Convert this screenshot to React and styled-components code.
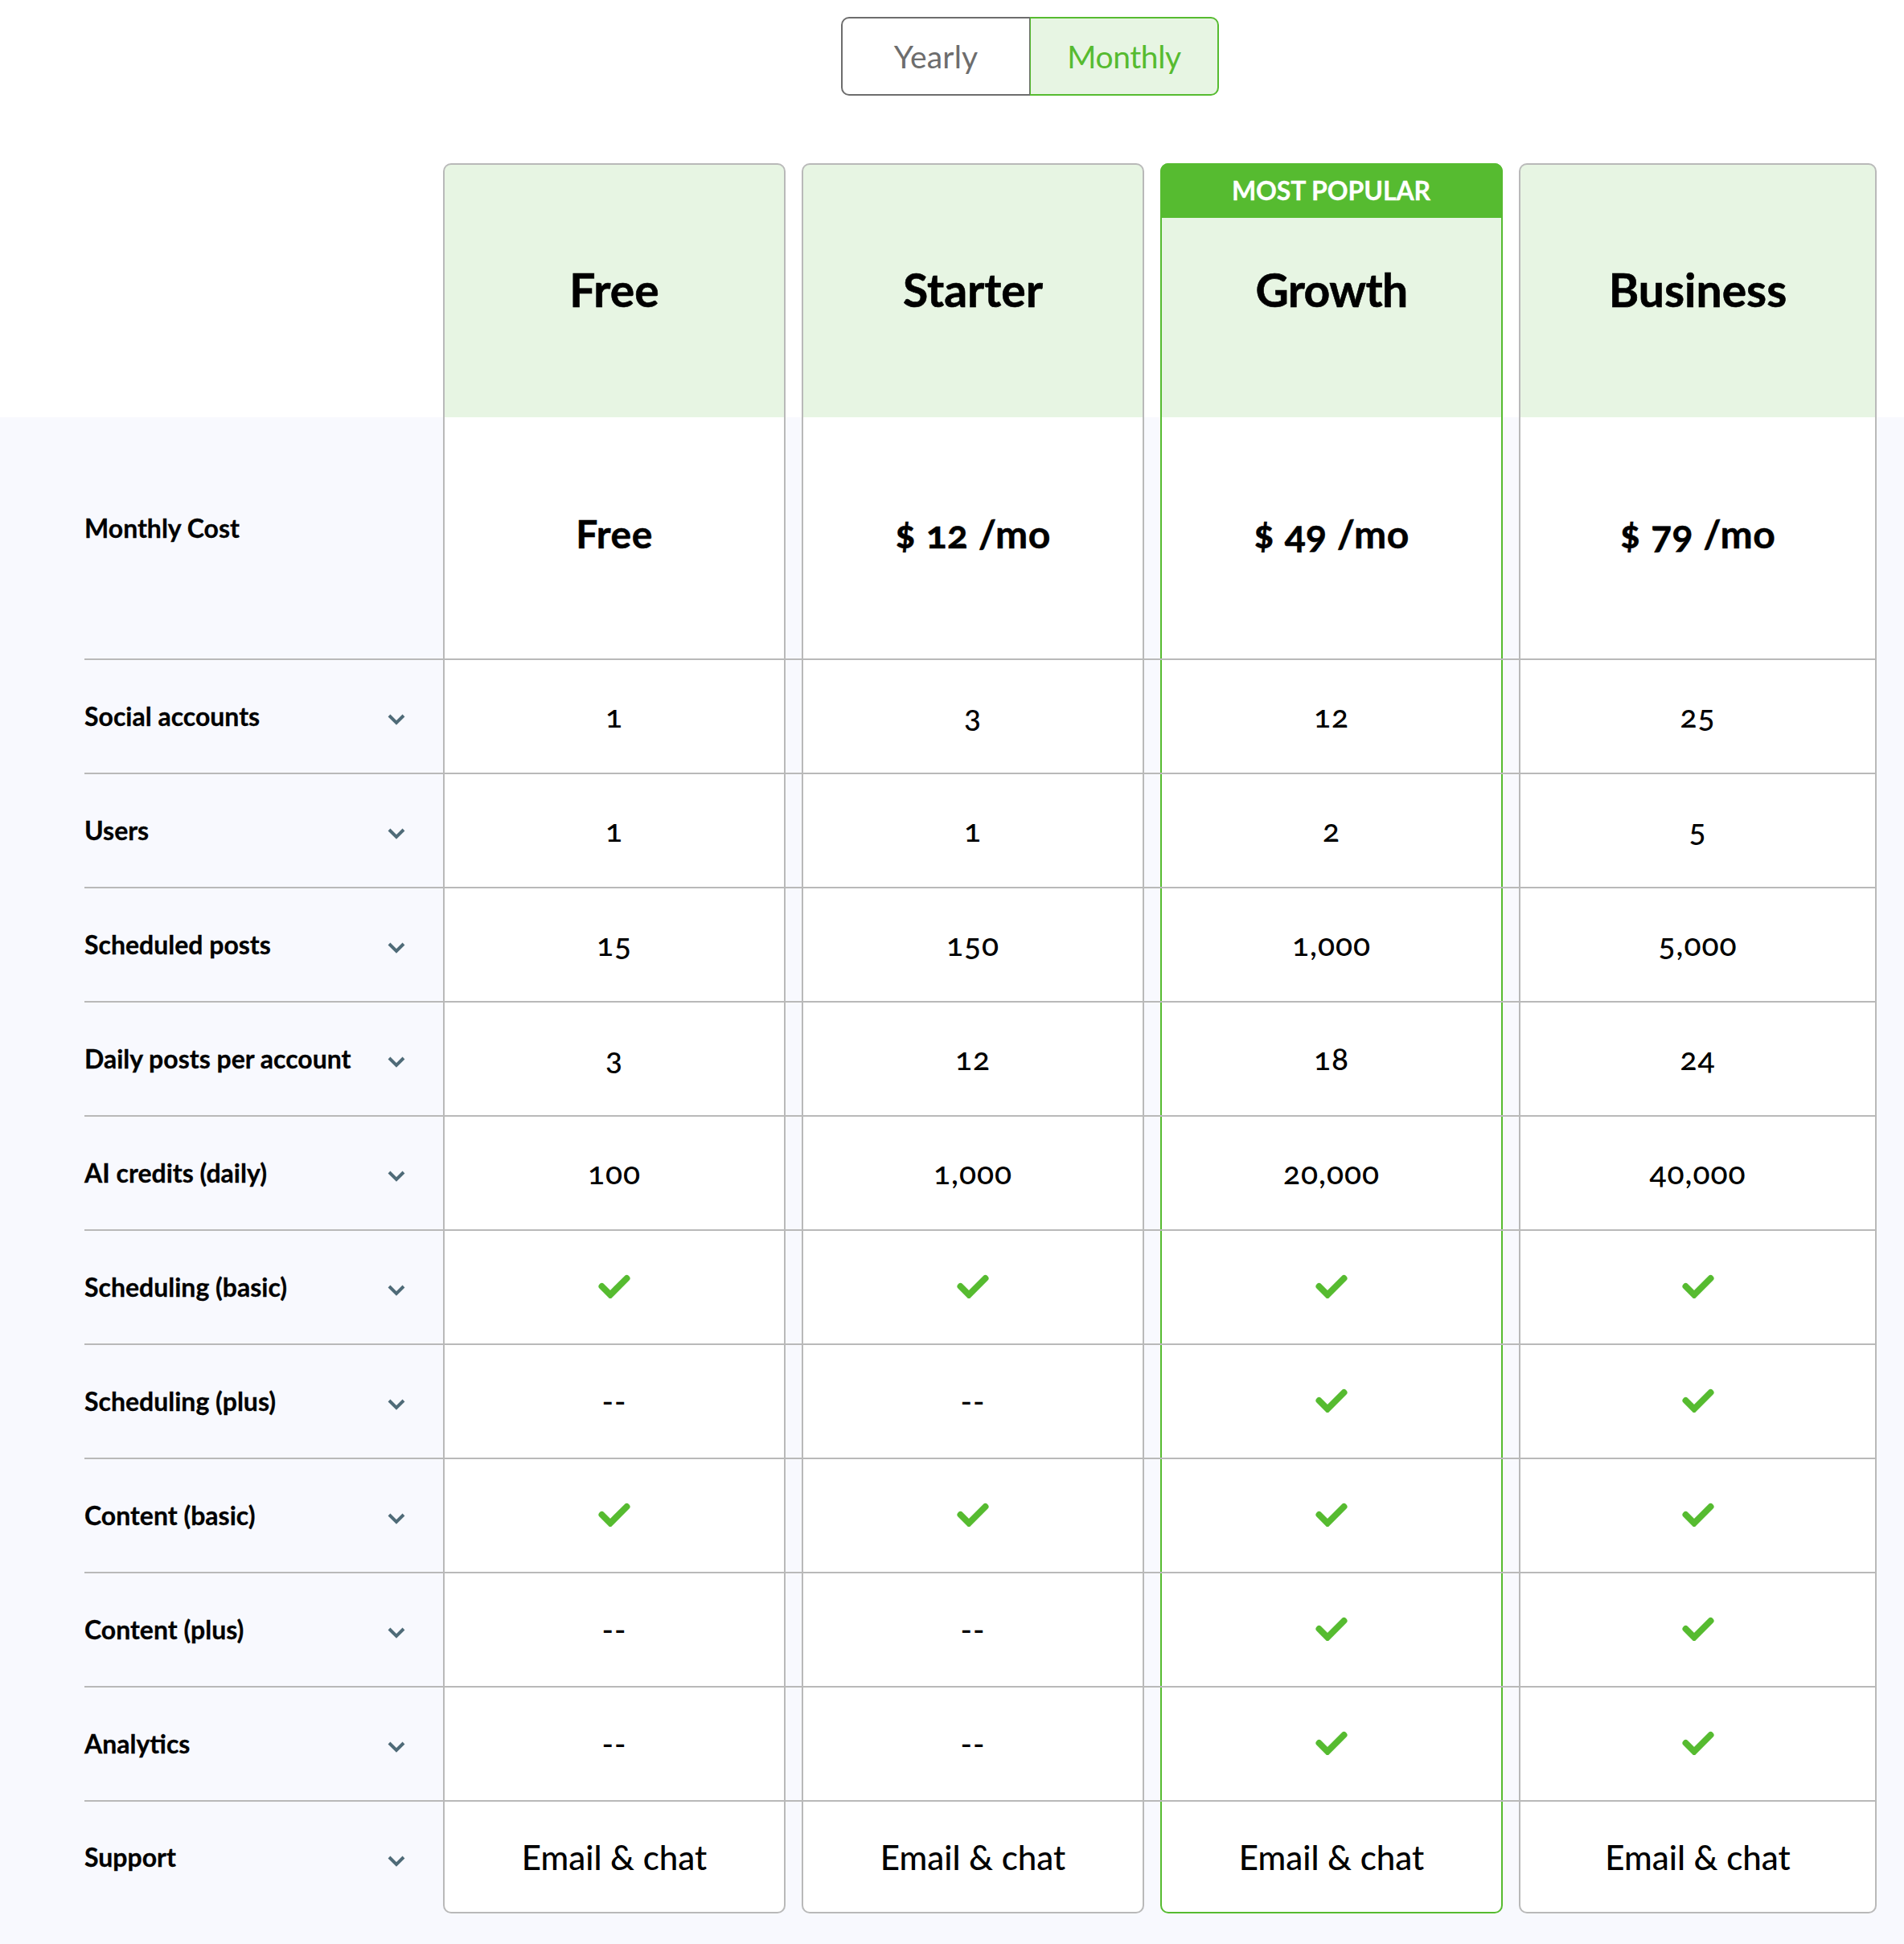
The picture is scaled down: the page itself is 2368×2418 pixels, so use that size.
import React from 'react'
import styled, { createGlobalStyle } from 'styled-components'

const GlobalStyle = createGlobalStyle`
  body {
    margin: 0;
    background: #fff;
    font-family: "Lato", "Liberation Sans", sans-serif;
    color: #000;
    font-feature-settings: "onum" 1;
  }
`

const COLUMNS = '426px 426px 426px 426px 445px'
const GREEN = '#56bb30'
const LINE = '#b9b9b9'

const Page = styled.div`
  width: 2368px;
  height: 2418px;
  display: flex;
  flex-direction: column;
  overflow: hidden;
`
const ToggleBar = styled.div`
  display: flex;
  padding: 21px 0 0 1046px;
`
const ToggleButton = styled.button`
  width: 235px;
  height: 98px;
  padding: 0;
  font: 400 39px "Lato", sans-serif;
  letter-spacing: ${p => p.$active ? -0.4 : 0.2}px;
  color: ${p => p.$active ? GREEN : '#6d6d6d'};
  background: ${p => p.$active ? '#e7f5e3' : '#fff'};
  border: 2px solid ${p => p.$active ? GREEN : '#6d6d6d'};
  border-right-width: ${p => p.$active ? 2 : 1}px;
  border-left-width: ${p => p.$active ? 1 : 2}px;
  border-radius: ${p => p.$active ? '0 10px 10px 0' : '10px 0 0 10px'};
`
const HeaderRow = styled.div`
  display: grid;
  grid-template-columns: ${COLUMNS};
  column-gap: 20px;
  margin: 84px 0 0 105px;
  width: 2229px;
  height: 316px;
`
const PlanHead = styled.div`
  position: relative;
  display: flex;
  align-items: center;
  justify-content: center;
  padding-bottom: 4px;
  background: #e7f5e3;
  border: 2px solid ${p => p.$popular ? GREEN : LINE};
  border-bottom: 0;
  border-radius: 10px 10px 0 0;
  font-size: 57px;
  font-weight: 700;
  letter-spacing: ${p => p.$popular ? -0.6 : 0}px;
  -webkit-text-stroke: 0.6px #000;
`
const PopularBand = styled.div`
  position: absolute;
  top: -2px;
  left: -2px;
  right: -2px;
  height: 68px;
  padding: 0 1px 2px 0;
  box-sizing: border-box;
  display: flex;
  align-items: center;
  justify-content: center;
  background: ${GREEN};
  border-radius: 10px 10px 0 0;
  color: #fff;
  font-size: 32px;
  font-weight: 700;
  letter-spacing: -0.1px;
  -webkit-text-stroke: 0.3px #fff;
`
const Body = styled.div`
  flex: 1;
  background: #f8f9fe;
  padding-left: 105px;
`
const Row = styled.div`
  display: grid;
  grid-template-columns: ${COLUMNS};
  column-gap: 20px;
  width: 2229px;
  height: ${p => p.$first ? 300 : p.$last ? 141 : 142}px;
  border-top: ${p => p.$first ? 0 : 2}px solid ${LINE};
  box-sizing: border-box;
`
const Label = styled.div`
  display: flex;
  align-items: center;
  justify-content: space-between;
  padding: 0 ${p => p.$first ? 0 : 27}px ${p => p.$first ? 26 : 2}px 0;
  font-size: 32px;
  font-weight: 700;
  -webkit-text-stroke: 0.3px #000;
`
const Chevron = styled.svg`
  width: 22px;
  height: 14px;
  margin-top: 10px;
  fill: none;
  stroke: #4f6b78;
  stroke-width: 4;
`
const Cell = styled.div`
  display: flex;
  align-items: center;
  justify-content: center;
  background: #fff;
  border-left: 2px solid ${p => p.$popular ? GREEN : LINE};
  border-right: 2px solid ${p => p.$popular ? GREEN : LINE};
  border-bottom: ${p => p.$last ? `2px solid ${p.$popular ? GREEN : LINE}` : 0};
  border-radius: ${p => p.$last ? '0 0 10px 10px' : 0};
  box-sizing: border-box;
  padding-bottom: ${p => p.$price ? 12 : p.$text ? 0 : 3}px;
  font-size: ${p => p.$price ? 48 : p.$text ? 42 : 39}px;
  font-weight: ${p => p.$price ? 700 : 500};
  letter-spacing: ${p => p.$price ? 0.5 : p.$text ? 0 : 1}px;
  -webkit-text-stroke: ${p => p.$price ? 0.5 : 0}px #000;
`
const CheckIcon = styled.svg`
  width: 40px;
  height: 30px;
  fill: none;
  stroke: ${GREEN};
  stroke-width: 8;
  stroke-linecap: round;
`

const plans = ['Free', 'Starter', 'Growth', 'Business']
const prices = ['Free', '$ 12 /mo', '$ 49 /mo', '$ 79 /mo']
const Y = 'check'
const rows = [
  ['Social accounts', '1', '3', '12', '25'],
  ['Users', '1', '1', '2', '5'],
  ['Scheduled posts', '15', '150', '1,000', '5,000'],
  ['Daily posts per account', '3', '12', '18', '24'],
  ['AI credits (daily)', '100', '1,000', '20,000', '40,000'],
  ['Scheduling (basic)', Y, Y, Y, Y],
  ['Scheduling (plus)', '--', '--', Y, Y],
  ['Content (basic)', Y, Y, Y, Y],
  ['Content (plus)', '--', '--', Y, Y],
  ['Analytics', '--', '--', Y, Y],
  ['Support', 'Email & chat', 'Email & chat', 'Email & chat', 'Email & chat'],
]

function Check() {
  return (
    <CheckIcon viewBox="0 0 40 30">
      <polyline points="4.5,15 15,25.5 35.5,5" />
    </CheckIcon>
  )
}

export default function App() {
  return (
    <Page>
      <GlobalStyle />
      <ToggleBar>
        <ToggleButton>Yearly</ToggleButton>
        <ToggleButton $active>Monthly</ToggleButton>
      </ToggleBar>
      <HeaderRow>
        <div />
        {plans.map(name => (
          <PlanHead key={name} $popular={name === 'Growth'}>
            {name === 'Growth' && <PopularBand>MOST POPULAR</PopularBand>}
            {name}
          </PlanHead>
        ))}
      </HeaderRow>
      <Body>
        <Row $first>
          <Label $first>Monthly Cost</Label>
          {prices.map((price, i) => (
            <Cell key={i} $price $popular={i === 2}>{price}</Cell>
          ))}
        </Row>
        {rows.map((row, r) => (
          <Row key={row[0]} $last={r === rows.length - 1}>
            <Label>
              {row[0]}
              <Chevron viewBox="0 0 22 14"><polyline points="2,2 11,11 20,2" /></Chevron>
            </Label>
            {row.slice(1).map((value, i) => (
              <Cell
                key={i}
                $popular={i === 2}
                $last={r === rows.length - 1}
                $text={r === rows.length - 1}
              >
                {value === Y ? <Check /> : value}
              </Cell>
            ))}
          </Row>
        ))}
      </Body>
    </Page>
  )
}
